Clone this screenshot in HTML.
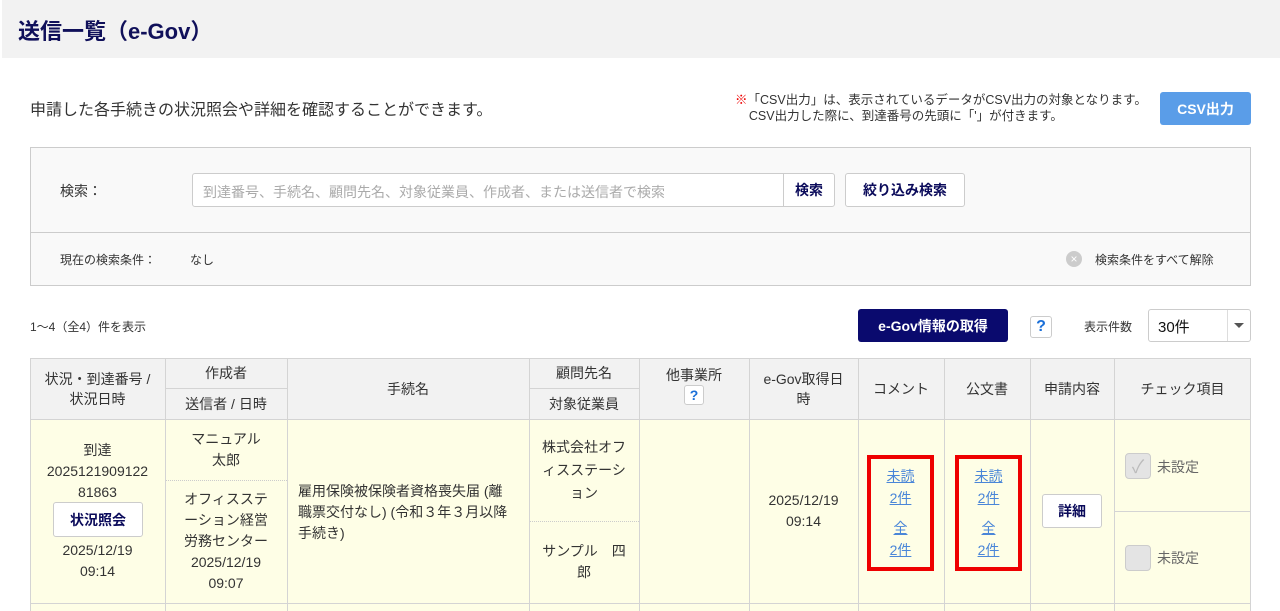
<!DOCTYPE html>
<html><head><meta charset="utf-8"><style>
*{margin:0;padding:0;box-sizing:border-box}
body{width:1280px;height:611px;overflow:hidden;background:#fff;font-family:"Liberation Sans","Noto Sans CJK JP",sans-serif;color:#333;position:relative}
.a{position:absolute}
.c{position:absolute;display:flex;align-items:center;justify-content:center;text-align:center;flex-direction:column}
.btn{background:#fff;border:1px solid #ccc;border-radius:3px;font-weight:bold;color:#0a0a5a}
.v{position:absolute;width:1px;background:#d4d4d4}
.h{position:absolute;height:1px;background:#d4d4d4}
.d{position:absolute;height:0;border-top:1px dotted #ccc}
.lk{color:#4a86d8;text-decoration:underline;font-size:14px;line-height:22px}
</style></head><body>
<div class="a" style="left:2px;top:0;width:1278px;height:58px;background:#f2f2f2"></div>
<div class="a" style="left:18px;top:14px;font-size:22px;font-weight:bold;color:#10105a">送信一覧（e-Gov）</div>
<div class="a" style="left:30px;top:96px;font-size:16px;color:#333">申請した各手続きの状況照会や詳細を確認することができます。</div>
<div class="a" style="left:735px;top:92px;font-size:12.5px;line-height:16px;color:#333;white-space:nowrap"><span style="color:#e00">※</span>「CSV出力」は、表示されているデータがCSV出力の対象となります。<br>&nbsp;&nbsp;&nbsp;&nbsp;CSV出力した際に、到達番号の先頭に「'」が付きます。</div>
<div class="c" style="left:1160px;top:92px;width:91px;height:33px;background:#5a9de8;border-radius:3px;color:#fff;font-weight:bold;font-size:14px">CSV出力</div>

<div class="a" style="left:30px;top:147px;width:1221px;height:139px;background:#f9f9f9;border:1px solid #ccc"></div>
<div class="h" style="left:31px;top:232px;width:1219px;background:#ccc"></div>
<div class="a" style="left:60px;top:181px;font-size:14px">検索：</div>
<div class="a" style="left:192px;top:173px;width:592px;height:34px;background:#fff;border:1px solid #ccc;border-radius:3px 0 0 3px;font-size:14px;color:#aaa;padding:8px 10px">到達番号、手続名、顧問先名、対象従業員、作成者、または送信者で検索</div>
<div class="c btn" style="left:783px;top:173px;width:52px;height:34px;border-radius:0 3px 3px 0;font-size:14px">検索</div>
<div class="c btn" style="left:845px;top:173px;width:120px;height:34px;font-size:14px">絞り込み検索</div>
<div class="a" style="left:60px;top:251px;font-size:12px">現在の検索条件：</div>
<div class="a" style="left:190px;top:251px;font-size:12px">なし</div>
<div class="c" style="left:1066px;top:251px;width:16px;height:16px;border-radius:50%;background:#ccc;color:#fff;font-size:12px;line-height:1">×</div>
<div class="a" style="left:1095px;top:251px;font-size:12px">検索条件をすべて解除</div>

<div class="a" style="left:30px;top:318px;font-size:12px">1〜4（全4）件を表示</div>
<div class="c" style="left:858px;top:309px;width:150px;height:33px;background:#0a0a6e;border-radius:3px;color:#fff;font-weight:bold;font-size:14px">e-Gov情報の取得</div>
<div class="c" style="left:1030px;top:316px;width:22px;height:22px;border:1px solid #ccc;border-radius:3px;color:#1a6fd8;font-weight:bold;font-size:16px;background:#fff">?</div>
<div class="a" style="left:1084px;top:318px;font-size:12px">表示件数</div>
<div class="a" style="left:1148px;top:309px;width:103px;height:33px;border:1px solid #ccc;border-radius:3px;background:#fff"></div>
<div class="a" style="left:1158px;top:316px;font-size:15px;color:#111">30件</div>
<div class="v" style="left:1227px;top:310px;height:31px;background:#ddd"></div>
<div class="a" style="left:1234px;top:323px;border:5px solid transparent;border-top:5px solid #555;border-bottom:0"></div>

<div class="a" style="left:30px;top:358px;width:1221px;height:61px;background:#f2f2f2"></div>
<div class="a" style="left:30px;top:419px;width:1221px;height:192px;background:#fefee6"></div>
<div class="h" style="left:30px;top:358px;width:1221px"></div>
<div class="h" style="left:30px;top:419px;width:1221px"></div>
<div class="h" style="left:30px;top:603px;width:1221px"></div>
<div class="h" style="left:165px;top:388px;width:122px"></div>
<div class="h" style="left:529px;top:388px;width:110px"></div>
<div class="d" style="left:166px;top:480px;width:121px"></div>
<div class="d" style="left:530px;top:521px;width:109px"></div>
<div class="h" style="left:1114px;top:511px;width:137px"></div>
<div class="v" style="left:30px;top:358px;height:253px"></div>
<div class="v" style="left:165px;top:358px;height:253px"></div>
<div class="v" style="left:287px;top:358px;height:253px"></div>
<div class="v" style="left:529px;top:358px;height:253px"></div>
<div class="v" style="left:639px;top:358px;height:253px"></div>
<div class="v" style="left:749px;top:358px;height:253px"></div>
<div class="v" style="left:858px;top:358px;height:253px"></div>
<div class="v" style="left:944px;top:358px;height:253px"></div>
<div class="v" style="left:1030px;top:358px;height:253px"></div>
<div class="v" style="left:1114px;top:358px;height:253px"></div>
<div class="v" style="left:1250px;top:358px;height:253px"></div>

<div class="c" style="left:30px;top:358px;width:135px;height:61px;font-size:14px;line-height:20px"><div>状況・到達番号 /<br>状況日時</div></div>
<div class="c" style="left:165px;top:358px;width:122px;height:30px;font-size:14px">作成者</div>
<div class="c" style="left:165px;top:388px;width:122px;height:31px;font-size:14px">送信者 / 日時</div>
<div class="c" style="left:287px;top:358px;width:242px;height:61px;font-size:14px">手続名</div>
<div class="c" style="left:529px;top:358px;width:110px;height:30px;font-size:14px">顧問先名</div>
<div class="c" style="left:529px;top:388px;width:110px;height:31px;font-size:14px">対象従業員</div>
<div class="c" style="left:639px;top:362px;width:110px;height:46px;font-size:14px;line-height:20px">他事業所<span style="display:inline-block;width:20px;height:20px;border:1px solid #ccc;border-radius:3px;background:#fff;color:#1a6fd8;font-weight:bold;line-height:18px">?</span></div>
<div class="c" style="left:749px;top:358px;width:109px;height:61px;font-size:14px;line-height:20px"><div>e-Gov取得日<br>時</div></div>
<div class="c" style="left:858px;top:358px;width:86px;height:61px;font-size:14px">コメント</div>
<div class="c" style="left:944px;top:358px;width:86px;height:61px;font-size:14px">公文書</div>
<div class="c" style="left:1030px;top:358px;width:84px;height:61px;font-size:14px">申請内容</div>
<div class="c" style="left:1114px;top:358px;width:137px;height:61px;font-size:14px">チェック項目</div>

<div class="a" style="left:30px;top:440px;width:135px;text-align:center;font-size:14px;line-height:21px">到達<br>2025121909122<br>81863</div>
<div class="c btn" style="left:53px;top:502px;width:90px;height:35px;font-size:14px">状況照会</div>
<div class="a" style="left:30px;top:540px;width:135px;text-align:center;font-size:14px;line-height:21px">2025/12/19<br>09:14</div>
<div class="c" style="left:165px;top:419px;width:122px;height:61px;font-size:14px;line-height:21px"><div>マニュアル<br>太郎</div></div>
<div class="c" style="left:165px;top:480px;width:122px;height:123px;font-size:14px;line-height:21px"><div>オフィスステ<br>ーション経営<br>労務センター<br>2025/12/19<br>09:07</div></div>
<div class="a" style="left:298px;top:481px;width:216px;font-size:14px;line-height:21px">雇用保険被保険者資格喪失届 (離職票交付なし) (令和３年３月以降手続き)</div>
<div class="c" style="left:529px;top:419px;width:110px;height:102px;font-size:14px;line-height:23px"><div style="white-space:nowrap">株式会社オフ<br>ィスステーシ<br>ョン</div></div>
<div class="c" style="left:529px;top:521px;width:110px;height:82px;font-size:14px;line-height:21px"><div style="white-space:nowrap">サンプル　四<br>郎</div></div>
<div class="c" style="left:749px;top:419px;width:109px;height:184px;font-size:14px;line-height:21px"><div>2025/12/19<br>09:14</div></div>
<div class="c" style="left:867px;top:455px;width:67px;height:116px;border:4px solid #e00"><span class="lk">未読</span><span class="lk">2件</span><span style="height:8px"></span><span class="lk">全</span><span class="lk">2件</span></div>
<div class="c" style="left:955px;top:455px;width:67px;height:116px;border:4px solid #e00"><span class="lk">未読</span><span class="lk">2件</span><span style="height:8px"></span><span class="lk">全</span><span class="lk">2件</span></div>
<div class="c btn" style="left:1042px;top:494px;width:60px;height:34px;font-size:14px">詳細</div>
<div class="c" style="left:1125px;top:453px;width:26px;height:26px;border:1px solid #ccc;border-radius:4px;background:#e4e4e4;color:#bbb;font-size:18px">✓</div>
<div class="a" style="left:1157px;top:457px;font-size:14px;color:#666">未設定</div>
<div class="a" style="left:1125px;top:545px;width:26px;height:26px;border:1px solid #ccc;border-radius:4px;background:#e4e4e4"></div>
<div class="a" style="left:1157px;top:548px;font-size:14px;color:#666">未設定</div>
</body></html>
